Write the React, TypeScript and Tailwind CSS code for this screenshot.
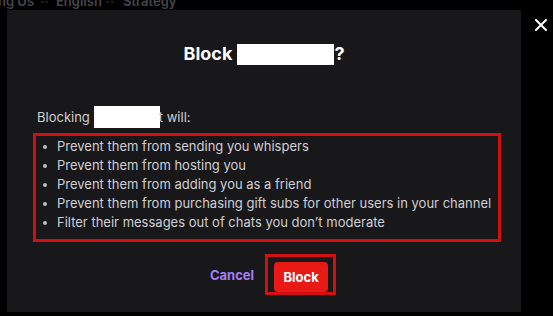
import React from "react";

const items = [
  "Prevent them from sending you whispers",
  "Prevent them from hosting you",
  "Prevent them from adding you as a friend",
  "Prevent them from purchasing gift subs for other users in your channel",
  "Filter their messages out of chats you don\u2019t moderate",
];

export default function App() {
  return (
    <div
      className="relative w-[553px] h-[316px] overflow-hidden bg-black"
      style={{ fontFamily: "Inter, 'Noto Sans', Arial, sans-serif" }}
    >
      {/* dim background strip */}
      <div className="h-[10px] overflow-hidden flex items-start text-[13px] font-semibold text-[#45454a] leading-[16px]">
        <div className="-mt-[7px] flex items-center">
          <span className="-ml-[2px] w-[35px] whitespace-nowrap">ng Us</span>
          <span className="w-[23px] text-center text-[#2a2a2e]">··</span>
          <span className="w-[41px] whitespace-nowrap">English</span>
          <span className="w-[26px] text-center text-[#2a2a2e]">··</span>
          <span className="whitespace-nowrap">Strategy</span>
        </div>
      </div>

      {/* modal */}
      <div className="ml-[7px] w-[514px] h-[302px] bg-[#18181b] flex flex-col px-[30px] pt-[33px] pb-[17px]">
        <div className="flex items-center justify-center h-[22px] text-[18px] font-bold text-white leading-[22px]">
          <span>Block</span>
          <span className="ml-[5px] inline-block w-[97px] h-[21px] bg-white" />
          <span>?</span>
        </div>
        <div className="mt-[21px] h-px bg-[#36363b]" />
        <div className="mt-[20px] flex items-center h-[22px] text-[13px] text-[#cfcfd3] leading-[22px]">
          <span>Blocking</span>
          <span className="ml-[4px] inline-block w-[66px] h-[22px] bg-white" />
          <span className="-ml-[1px]">t will:</span>
        </div>
        <ul className="mt-[5px] -ml-[4px] -mr-[10px] border-[3px] border-[#d40f12] pt-[1px] pb-[7px] text-[13px] leading-[19px] text-[#cfcfd3]">
          {items.map((t) => (
            <li key={t} className="flex items-center h-[19px]">
              <span className="ml-[7px] mr-[10px] w-[4px] h-[4px] rounded-full bg-[#bdbdc2] shrink-0" />
              <span className="whitespace-nowrap">{t}</span>
            </li>
          ))}
        </ul>
        <div className="mt-[12px] flex items-center justify-center pl-[18px] gap-[11px]">
          <button className="text-[13px] font-bold text-[#a47ef5] leading-[16px]">Cancel</button>
          <div className="border-[3px] border-[#d40f12] pt-[5px] pb-[0px] pl-[6px] pr-[5px]">
            <button className="h-[30px] w-[54px] rounded-[4px] bg-[#e91916] text-white text-[13px] font-bold leading-[16px]">
              Block
            </button>
          </div>
        </div>
      </div>

      {/* close */}
      <div className="absolute left-[535px] top-[19px] w-[12px] h-[12px] text-white">
        <svg viewBox="0 0 12 12" width="12" height="12">
          <path d="M1 1 L11 11 M11 1 L1 11" stroke="white" strokeWidth="2" strokeLinecap="square" />
        </svg>
      </div>
    </div>
  );
}
